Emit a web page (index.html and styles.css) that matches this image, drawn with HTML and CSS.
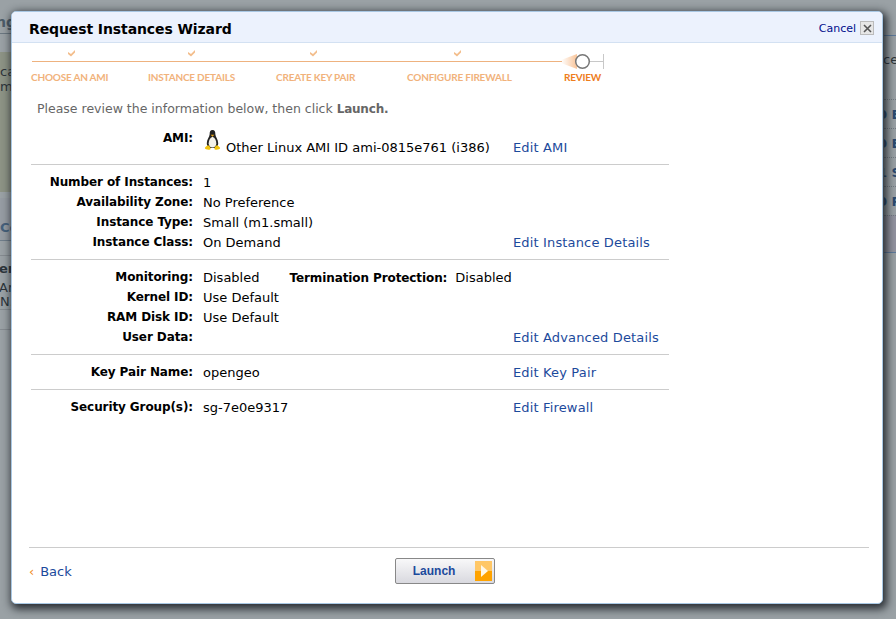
FILE: index.html
```html
<!DOCTYPE html>
<html lang="en">

<head>
    <meta charset="UTF-8">
    <meta name="viewport" content="width=device-width, initial-scale=1.0">
    <title>Request Instances Wizard</title>
    <link rel="stylesheet" href="styles.css">
</head>

<body>
    <!-- page dimmed behind the dialog -->
    <div class="backdrop">
        <div class="bg-left">
            <div class="bg-head">ng</div>
            <div class="bg-note">ca<br>ma</div>
            <div class="bg-tab">Ce</div>
            <div class="bg-cell"><b>ent</b><p>Ar<br>N.</p></div>
            <div class="bg-rule"></div>
        </div>
        <div class="bg-right">
            <div class="bg-top"></div>
            <div class="bg-note">ces</div>
            <div class="bg-row">0 E</div>
            <div class="bg-row">0 E</div>
            <div class="bg-row">1 S</div>
            <div class="bg-row">0 P</div>
            <div class="bg-band"></div>
        </div>
    </div>

    <div class="wizard">
        <div class="wizard-head">
            <h1>Request Instances Wizard</h1>
            <a class="cancel" href="#">Cancel</a>
            <span class="close">
                <svg width="9" height="9" viewBox="0 0 9 9">
                    <path d="M1 1 8 8M8 1 1 8" stroke="#555" stroke-width="1.6" fill="none" />
                </svg>
            </span>
        </div>

        <div class="wizard-body">
            <svg class="track" width="600" height="22" viewBox="0 0 600 22">
                <defs>
                    <linearGradient id="glow">
                        <stop offset="0" stop-color="#f8b680" stop-opacity="0" />
                        <stop offset="1" stop-color="#f8b680" stop-opacity=".8" />
                    </linearGradient>
                </defs>
                <path class="tick" d="M37 3 40 5 44 1V3.500L40 7.500 37 5Z" />
                <path class="tick" d="M157 3 160 5 164 1V3.500L160 7.500 157 5Z" />
                <path class="tick" d="M279 3 282 5 286 1V3.500L282 7.500 279 5Z" />
                <path class="tick" d="M423 3 426 5 430 1V3.500L426 7.500 423 5Z" />
                <rect x="1" y="12" width="530" height="1" fill="#eeb27f" />
                <path d="M530 11 546 5V20L530 14Z" fill="url(#glow)" />
                <path d="M558 12.500H572M572.500 5V20" stroke="#c8c8c8" fill="none" />
                <circle cx="551.500" cy="12.500" r="6.800" fill="#fff" stroke="#777" stroke-width="1.500" />
            </svg>
            <div class="steps">
                <span class="step">CHOOSE AN AMI</span>
                <span class="step">INSTANCE DETAILS</span>
                <span class="step">CREATE KEY PAIR</span>
                <span class="step">CONFIGURE FIREWALL</span>
                <span class="step current">REVIEW</span>
            </div>

            <p class="intro">Please review the information below, then click <b>Launch.</b></p>

            <div class="section ami">
                <div class="row">
                    <span class="label">AMI:</span>
                    <span class="value">
                        <svg class="tux" width="17" height="20" viewBox="0 0 17 21">
                            <path d="M8.500 0C6 0 5.500 2 5.500 4.500 5.500 7 2.500 10 2.500 14 2.500 16 3.500 18 5 19H12C13.500 18 14.500 16 14.500 14 14.500 10 11.500 7 11.500 4.500 11.500 2 11 0 8.500 0Z" fill="#222" />
                            <path d="M8.500 7C6 8 4.500 11 4.500 14 4.500 16.500 6 18.500 8.500 18.500 11 18.500 12.500 16.500 12.500 14 12.500 11 11 8 8.500 7Z" fill="#f4f2ea" />
                            <path d="M6.500 5H10.500L8.500 7Z" fill="#e8a317" />
                            <path d="M3.500 16C2 17 .5 18 .5 19 .5 20.500 4 21 6 20.500 7 20 6.500 18 5 16.500ZM13.500 16C15 17 16.500 18 16.500 19 16.500 20.500 13 21 11 20.500 10 20 10.500 18 12 16.500Z" fill="#f2c40f" />
                        </svg>
                        <span>Other Linux AMI ID ami-0815e761 (i386)</span>
                    </span>
                    <a class="edit" href="#">Edit AMI</a>
                </div>
            </div>

            <div class="section">
                <div class="row"><span class="label">Number of Instances:</span><span class="value">1</span></div>
                <div class="row"><span class="label">Availability Zone:</span><span class="value">No Preference</span></div>
                <div class="row"><span class="label">Instance Type:</span><span class="value">Small (m1.small)</span></div>
                <div class="row"><span class="label">Instance Class:</span><span class="value">On Demand</span><a class="edit" href="#">Edit Instance Details</a></div>
            </div>

            <div class="section">
                <div class="row">
                    <span class="label">Monitoring:</span>
                    <span class="value">Disabled<b class="label-inline">Termination Protection:</b>Disabled</span>
                </div>
                <div class="row"><span class="label">Kernel ID:</span><span class="value">Use Default</span></div>
                <div class="row"><span class="label">RAM Disk ID:</span><span class="value">Use Default</span></div>
                <div class="row"><span class="label">User Data:</span><span class="value"></span><a class="edit" href="#">Edit Advanced Details</a></div>
            </div>

            <div class="section">
                <div class="row"><span class="label">Key Pair Name:</span><span class="value">opengeo</span><a class="edit" href="#">Edit Key Pair</a></div>
            </div>

            <div class="section last">
                <div class="row"><span class="label">Security Group(s):</span><span class="value">sg-7e0e9317</span><a class="edit" href="#">Edit Firewall</a></div>
            </div>
        </div>

        <div class="wizard-foot">
            <a class="back" href="#"><i>&lsaquo;</i>Back</a>
            <button class="launch" type="button">
                <span>Launch</span>
                <svg width="17" height="20" viewBox="0 0 17 20">
                    <rect width="17" height="20" fill="#ffa300" />
                    <rect width="17" height="10" fill="#ffc766" />
                    <path d="M6 4 13 10 6 16Z" fill="#fff8e8" />
                </svg>
            </button>
        </div>
    </div>
</body>

</html>
```

FILE: styles.css
```css
html,
body {
    height: 100%;
}

body {
    margin: 0;
    overflow: hidden;
    background: #9aa1a5;
    font-family: "DejaVu Sans", Verdana, sans-serif;
    font-size: 13px;
    color: #000;
}

a {
    text-decoration: none;
    color: #1c4a9c;
}

/* dimmed page */
.backdrop {
    position: absolute;
    top: 0;
    left: 0;
    width: 100%;
    height: 100%;
    overflow: hidden;
    color: #2c343a;
    font-size: 13px;
}

.bg-left {
    position: absolute;
    top: 0;
    left: 0;
    width: 11px;
    height: 100%;
    overflow: hidden;
    white-space: nowrap;
}

.bg-head {
    box-sizing: border-box;
    height: 34px;
    padding-top: 14px;
    line-height: 16px;
    border-bottom: 1px solid #6b7780;
    font-weight: bold;
    font-size: 14px;
    text-indent: -4px;
    color: #4c5b68;
}

.bg-left .bg-note {
    box-sizing: border-box;
    margin-top: 18px;
    height: 140px;
    padding-top: 12px;
    line-height: 15px;
    background: #8d9385;
}

.bg-tab {
    box-sizing: border-box;
    margin-top: 6px;
    height: 43px;
    padding-top: 22px;
    line-height: 16px;
    background: #969ca3;
    border-bottom: 1px solid #6f7d8a;
    font-weight: bold;
    color: #46617c;
}

.bg-cell {
    box-sizing: border-box;
    margin-top: 14px;
    height: 55px;
    padding-top: 6px;
    line-height: 14px;
    border-top: 1px solid #858b90;
    border-bottom: 1px solid #858b90;
    text-indent: -1px;
}

.bg-cell p {
    margin: 5px 0 0;
    line-height: 14px;
}

.bg-rule {
    height: 19px;
    border-bottom: 1px solid #858b90;
}

.bg-right {
    position: absolute;
    top: 0;
    left: 884px;
    width: 12px;
    height: 100%;
    overflow: hidden;
    white-space: nowrap;
}

.bg-top {
    height: 35px;
    border-bottom: 1px solid #5d7a9c;
}

.bg-right .bg-note {
    box-sizing: border-box;
    height: 63px;
    padding-top: 16px;
    line-height: 16px;
    text-indent: -1px;
}

.bg-row {
    box-sizing: border-box;
    height: 29px;
    line-height: 29px;
    border-top: 1px dotted #747c84;
    font-weight: bold;
    text-indent: -6px;
    color: #2a4a70;
}

.bg-band {
    height: 36px;
    border-top: 1px dotted #747c84;
    border-bottom: 1px solid #5d7a9c;
    background: #92939f;
}

/* dialog */
.wizard {
    position: absolute;
    top: 11px;
    left: 11px;
    width: 872px;
    height: 593px;
    box-sizing: border-box;
    display: flex;
    flex-direction: column;
    background: #fff;
    border: 1px solid #a9c8e4;
    border-radius: 5px;
    box-shadow: 2px 3px 9px 2px rgba(20, 25, 30, .85);
}

.wizard-head {
    display: flex;
    align-items: center;
    box-sizing: border-box;
    height: 31px;
    padding: 2px 8px 0 17px;
    background: #ecf2fd;
    border-bottom: 1px solid #d3e1f2;
    border-radius: 4px 4px 0 0;
}

.wizard-head h1 {
    flex: 1;
    margin: 2px 0 0;
    font-size: 14px;
    font-weight: bold;
    letter-spacing: -.1px;
}

.cancel {
    font-size: 11px;
    color: #000e8c;
}

.close {
    display: flex;
    align-items: center;
    justify-content: center;
    box-sizing: border-box;
    width: 14px;
    height: 14px;
    margin-left: 4px;
    background: #e6e6e6;
    border: 1px solid #bbb;
}

.wizard-body {
    flex: 1;
    padding: 6px 0 0 19px;
}

.track {
    display: block;
}

.tick {
    fill: #f3bd8b;
}

.steps {
    display: flex;
    font-family: Lato, "Open Sans", sans-serif;
    font-size: 10px;
    letter-spacing: -.2px;
    line-height: 13px;
    font-weight: bold;
    color: #f1b27b;
    white-space: nowrap;
}

.step:nth-child(1) {
    width: 117px;
}

.step:nth-child(2) {
    width: 128px;
}

.step:nth-child(3) {
    width: 131px;
}

.step:nth-child(4) {
    width: 157px;
}

.step.current {
    color: #ee7d1c;
}

.intro {
    margin: 17px 0 11px 6px;
    font-size: 12.5px;
    color: #666;
    line-height: 16px;
}

.intro b {
    font-size: 12px;
    letter-spacing: -.2px;
}

.section {
    width: 638px;
    padding: 8px 0 6px;
    border-bottom: 1px solid #ccc;
}

.section.ami {
    padding: 0 0 6px;
}

.section.last {
    border-bottom: 0;
}

.row {
    display: grid;
    grid-template-columns: 162px 300px auto;
    column-gap: 10px;
    align-items: start;
    height: 20px;
    line-height: 20px;
    white-space: nowrap;
}

.label,
.label-inline {
    font-size: 12px;
    font-weight: bold;
    letter-spacing: -.1px;
}

.label {
    text-align: right;
    margin-top: -1px;
}

.label-inline {
    margin: 0 8px 0 30px;
}

.edit {
    letter-spacing: .15px;
}

.ami .row {
    height: 30px;
}

.ami .value {
    display: flex;
    align-items: flex-end;
    gap: 5px;
    height: 30px;
}

.ami .label {
    margin-top: 0;
}

.ami .edit {
    align-self: end;
}

.tux {
    flex: none;
    margin: 0 0 8px 1px;
}

.wizard-foot {
    display: flex;
    align-items: center;
    box-sizing: border-box;
    height: 56px;
    padding-bottom: 9px;
    margin: 0 13px 0 17px;
    border-top: 1px solid #ccc;
}

.back i {
    margin-right: 6px;
    font-style: normal;
    color: #f08a1c;
}

.launch {
    display: flex;
    align-items: center;
    justify-content: space-between;
    box-sizing: border-box;
    width: 100px;
    height: 26px;
    margin-left: 323px;
    padding: 0 2px 0 17px;
    background: linear-gradient(#f8f8f9, #d9d9df);
    border: 1px solid #888;
    border-radius: 2px;
    font-family: "Liberation Sans", Arial, sans-serif;
    font-size: 12px;
    font-weight: bold;
    color: #1c4a9c;
    cursor: pointer;
}
```
